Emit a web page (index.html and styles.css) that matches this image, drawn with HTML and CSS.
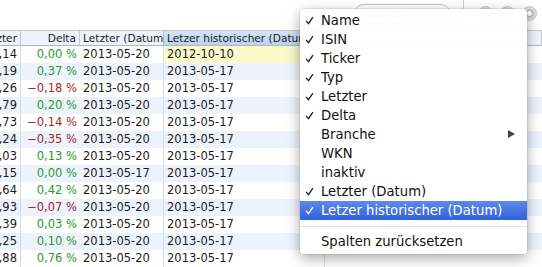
FILE: index.html
```html
<!DOCTYPE html>
<html lang="de">
<head>
<meta charset="UTF-8">
<title>Kurse</title>
<link rel="stylesheet" href="styles.css">
</head>
<body>
<div class="window">
    <div class="toolbar">
        <div class="search">Suchen</div>
        <div class="tb-sep"></div>
        <span class="tb-btn"></span>
        <span class="tb-btn"></span>
        <span class="tb-btn gear"></span>
    </div>

    <div class="table">
        <div class="row head">
            <div class="cell c1 num">Letzter</div>
            <div class="cell num">Delta</div>
            <div class="cell">Letzter (Datum)</div>
            <div class="cell sorted">Letzer historischer (Datum)</div>
            <div class="cell"></div>
        </div>
        <div class="row"><div class="cell c1 num">,14</div><div class="cell num up">0,00 %</div><div class="cell">2013-05-20</div><div class="cell edit">2012-10-10</div><div class="cell"></div></div>
        <div class="row"><div class="cell c1 num">,19</div><div class="cell num up">0,37 %</div><div class="cell">2013-05-20</div><div class="cell">2013-05-17</div><div class="cell"></div></div>
        <div class="row"><div class="cell c1 num">,26</div><div class="cell num down">&minus;0,18 %</div><div class="cell">2013-05-20</div><div class="cell">2013-05-17</div><div class="cell"></div></div>
        <div class="row"><div class="cell c1 num">,79</div><div class="cell num up">0,20 %</div><div class="cell">2013-05-20</div><div class="cell">2013-05-17</div><div class="cell"></div></div>
        <div class="row"><div class="cell c1 num">,73</div><div class="cell num down">&minus;0,14 %</div><div class="cell">2013-05-20</div><div class="cell">2013-05-17</div><div class="cell"></div></div>
        <div class="row"><div class="cell c1 num">,24</div><div class="cell num down">&minus;0,35 %</div><div class="cell">2013-05-20</div><div class="cell">2013-05-17</div><div class="cell"></div></div>
        <div class="row"><div class="cell c1 num">,03</div><div class="cell num up">0,13 %</div><div class="cell">2013-05-20</div><div class="cell">2013-05-17</div><div class="cell"></div></div>
        <div class="row"><div class="cell c1 num">,15</div><div class="cell num up">0,00 %</div><div class="cell">2013-05-17</div><div class="cell">2013-05-17</div><div class="cell"></div></div>
        <div class="row"><div class="cell c1 num">,64</div><div class="cell num up">0,42 %</div><div class="cell">2013-05-20</div><div class="cell">2013-05-17</div><div class="cell"></div></div>
        <div class="row"><div class="cell c1 num">,93</div><div class="cell num down">&minus;0,07 %</div><div class="cell">2013-05-20</div><div class="cell">2013-05-17</div><div class="cell"></div></div>
        <div class="row"><div class="cell c1 num">,39</div><div class="cell num up">0,03 %</div><div class="cell">2013-05-20</div><div class="cell">2013-05-17</div><div class="cell"></div></div>
        <div class="row"><div class="cell c1 num">,25</div><div class="cell num up">0,10 %</div><div class="cell">2013-05-20</div><div class="cell">2013-05-17</div><div class="cell"></div></div>
        <div class="row"><div class="cell c1 num">,88</div><div class="cell num up">0,76 %</div><div class="cell">2013-05-20</div><div class="cell">2013-05-17</div><div class="cell"></div></div>
    </div>

    <!-- context menu of the table header -->
    <div class="menu">
        <div class="item"><svg class="check" viewBox="0 0 10 10"><path d="M1.2 5.4 L3.9 8.6 L8.8 1.2"/></svg>Name</div>
        <div class="item"><svg class="check" viewBox="0 0 10 10"><path d="M1.2 5.4 L3.9 8.6 L8.8 1.2"/></svg>ISIN</div>
        <div class="item"><svg class="check" viewBox="0 0 10 10"><path d="M1.2 5.4 L3.9 8.6 L8.8 1.2"/></svg>Ticker</div>
        <div class="item"><svg class="check" viewBox="0 0 10 10"><path d="M1.2 5.4 L3.9 8.6 L8.8 1.2"/></svg>Typ</div>
        <div class="item"><svg class="check" viewBox="0 0 10 10"><path d="M1.2 5.4 L3.9 8.6 L8.8 1.2"/></svg>Letzter</div>
        <div class="item"><svg class="check" viewBox="0 0 10 10"><path d="M1.2 5.4 L3.9 8.6 L8.8 1.2"/></svg>Delta</div>
        <div class="item">Branche<span class="arrow"></span></div>
        <div class="item">WKN</div>
        <div class="item">inaktiv</div>
        <div class="item"><svg class="check" viewBox="0 0 10 10"><path d="M1.2 5.4 L3.9 8.6 L8.8 1.2"/></svg>Letzter (Datum)</div>
        <div class="item active"><svg class="check" viewBox="0 0 10 10"><path d="M1.2 5.4 L3.9 8.6 L8.8 1.2"/></svg>Letzer historischer (Datum)</div>
        <div class="menu-sep"></div>
        <div class="item">Spalten zurücksetzen</div>
    </div>
</div>
</body>
</html>
```

FILE: styles.css
```css
body {
    margin: 0;
    padding: 0;
    background: #fff;
    font-family: "DejaVu Sans", Verdana, sans-serif;
    color: #1c1c1c;
}

.window {
    position: relative;
    width: 542px;
    height: 267px;
    overflow: hidden;
}

/* toolbar */
.toolbar {
    height: 30px;
    display: flex;
    align-items: flex-start;
    justify-content: flex-end;
    padding-right: 5px;
    box-sizing: border-box;
}

.search {
    width: 97px;
    height: 20px;
    margin-top: 4px;
    margin-right: 12px;
    box-sizing: border-box;
    border: 1px solid #c4c4c4;
    border-radius: 10px;
    padding-left: 12px;
    font-size: 10px;
    line-height: 18px;
    color: #c8c8c8;
}

.tb-sep {
    width: 1px;
    height: 25px;
    background: #cfcfcf;
    margin-right: 14px;
}

.tb-btn {
    width: 13px;
    height: 13px;
    margin-top: 6px;
    margin-right: 7px;
    border-radius: 50%;
    background: #dcdcdc;
    border: 1px solid #c6c6c6;
}

.tb-btn.gear {
    margin-right: 0;
    background: radial-gradient(circle, #fff 0 2px, #bdbdbd 2.5px 4px, #dcdcdc 4.5px);
}

/* table */
.table {
    font-size: 11.5px;
}

.row {
    display: grid;
    grid-template-columns: 21px 59px 84px 161px 1fr;
    height: 17px;
    line-height: 17px;
}

.row:nth-child(odd) {
    background: #edf3fc;
}

.cell {
    padding: 0 3px;
    white-space: nowrap;
    overflow: hidden;
}

.row .c1 {
    border-right: 1px solid #d4dbe6;
}

.row .cell:nth-child(3) {
    border-right: 1px solid #d4dbe6;
}

.row .cell:nth-child(4) {
    border-right: 1px solid #d4dbe6;
}

.num {
    display: flex;
    justify-content: flex-end;
}

.up {
    color: #2c9a2c;
}

.down {
    color: #a52525;
}

.edit {
    background: #fbf8c9;
}

.head {
    height: 16px;
    line-height: 15px;
    font-size: 10.6px;
    box-sizing: border-box;
    border-top: 1px solid #c9c9c9;
    border-bottom: 1px solid #b5b5b5;
    background: linear-gradient(#ffffff, #f0f0f0);
}

.head .cell {
    border-right: 1px solid #c8c8c8;
}

.head .sorted {
    background: linear-gradient(#d3e4f8, #b9d3f1);
    border-left: 1px solid #9fb8d8;
    margin-left: -1px;
}

/* menu */
.menu {
    position: absolute;
    left: 300px;
    top: 9px;
    width: 227px;
    padding: 2px 0 3px;
    background: rgba(255, 255, 255, 0.95);
    border-radius: 4px;
    box-shadow: 0 4px 14px rgba(0, 0, 0, 0.35), 0 0 0 1px rgba(0, 0, 0, 0.06);
    font-size: 13.2px;
    color: #111;
}

.item {
    position: relative;
    height: 19px;
    line-height: 19px;
    padding-left: 21px;
}

.item.active {
    background: linear-gradient(#5d8ae9, #2f61d8);
    color: #fff;
}

.check {
    position: absolute;
    left: 5px;
    top: 5px;
    width: 9px;
    height: 9px;
    fill: none;
    stroke: #222;
    stroke-width: 1.5;
    overflow: visible;
}

.active .check {
    stroke: #fff;
}

.arrow {
    position: absolute;
    right: 12px;
    top: 5px;
    width: 0;
    height: 0;
    border-top: 4.5px solid transparent;
    border-bottom: 4.5px solid transparent;
    border-left: 7px solid #444;
}

.menu-sep {
    height: 1px;
    margin: 6px 0 5px;
    background: #e2e2e2;
}
```
